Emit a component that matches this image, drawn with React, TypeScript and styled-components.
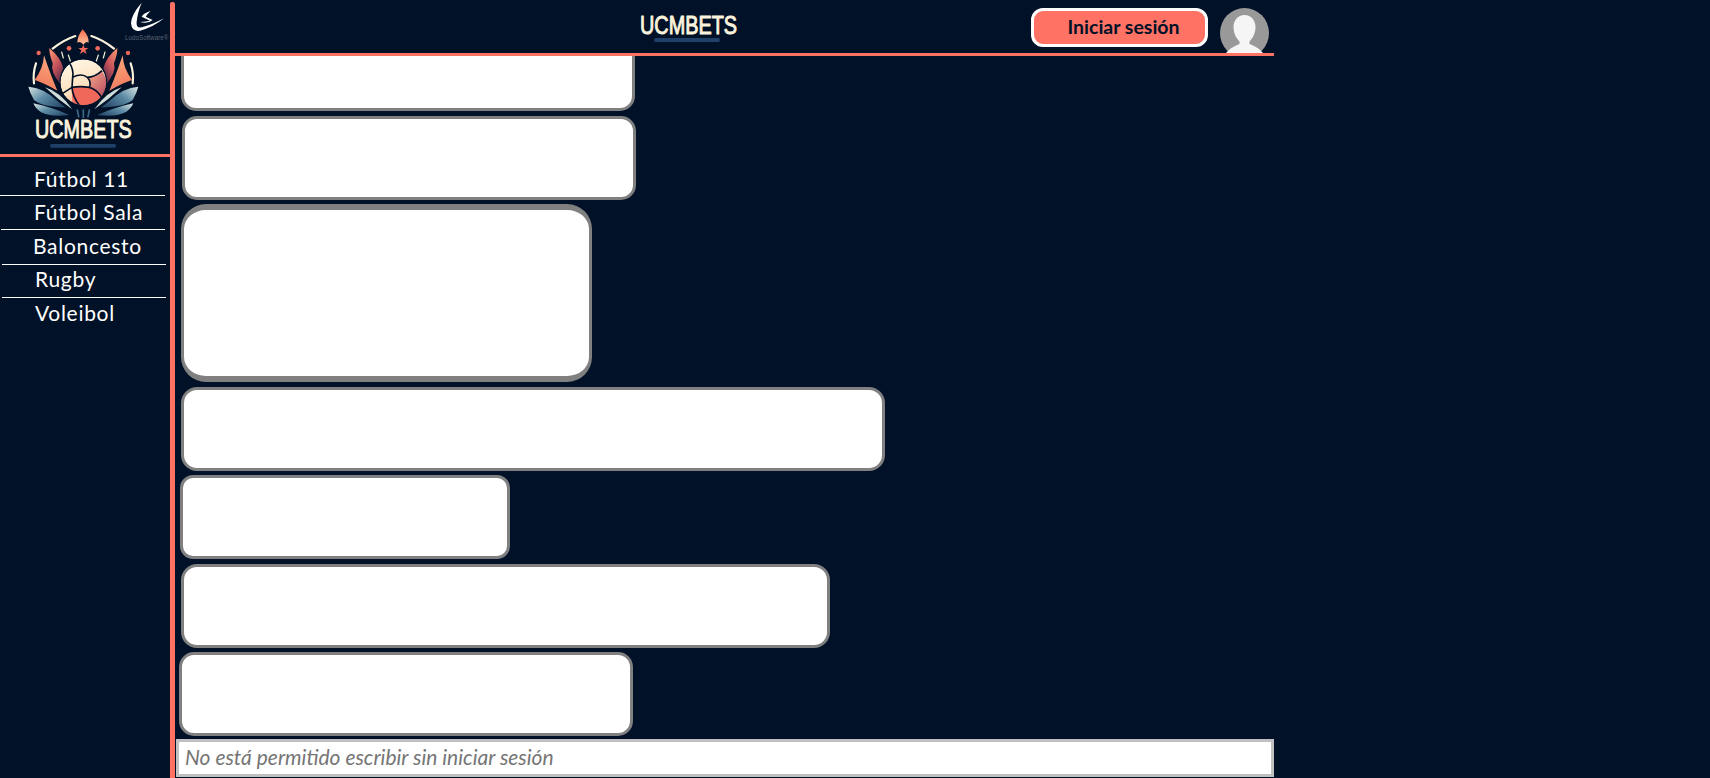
import React from "react";
import styled, { createGlobalStyle } from "styled-components";

const NAVY = "#001128";
const CORAL = "#ff7264";
const CREAM = "#fbf3dc";

const Global = createGlobalStyle`
  html, body { margin: 0; padding: 0; background: ${NAVY}; overflow: hidden; }
  * { box-sizing: border-box; }
`;

const Page = styled.div`
  display: flex;
  width: 1710px;
  height: 778px;
  background: ${NAVY};
  overflow: hidden;
  font-family: "Lato", "Liberation Sans", sans-serif;
`;

const Sidebar = styled.aside`
  display: flex;
  flex-direction: column;
  width: 170px;
  flex: none;
`;

const Brand = styled.div`
  position: relative;
  height: 157px;
  border-bottom: 3px solid ${CORAL};
`;

const Emblem = styled.svg`
  display: block;
  width: 170px;
  height: 154px;
`;

const MakerMark = styled.svg`
  position: absolute;
  top: 0;
  left: 125px;
  width: 45px;
  height: 42px;
  overflow: visible;
`;

const Menu = styled.nav`
  display: flex;
  flex-direction: column;
  padding-top: 8px;
`;

const MenuItem = styled.a<{ $height: number; $width: number; $lineLeft: number; $textLeft: number; $lift: number; $last?: boolean }>`
  display: flex;
  align-items: center;
  height: ${(p) => p.$height}px;
  width: ${(p) => p.$width}px;
  margin-left: ${(p) => p.$lineLeft}px;
  padding: 0 0 ${(p) => p.$lift}px ${(p) => p.$textLeft}px;
  color: #fff;
  font-size: 21px;
  letter-spacing: 0.7px;
  border-bottom: ${(p) => (p.$last ? "none" : "1px solid #fff")};
`;

const Rail = styled.div`
  flex: none;
  width: 5px;
  margin-top: 2px;
  background: ${CORAL};
  border-radius: 2px 2px 0 0;
`;

const Main = styled.main`
  display: flex;
  flex-direction: column;
  flex: none;
  width: 1099px;
  height: 778px;
`;

const Header = styled.header`
  display: flex;
  align-items: flex-start;
  flex: none;
  height: 56px;
  padding: 8px 5px 0 465px;
  border-bottom: 3px solid ${CORAL};
  overflow: hidden;
`;

const Wordmark = styled.svg`
  display: block;
  flex: none;
  width: 97px;
  height: 36px;
  overflow: visible;
`;

const LoginButton = styled.button`
  flex: none;
  width: 177px;
  height: 39px;
  margin-left: auto;
  padding: 0 0 2px 8px;
  background: ${CORAL};
  border: 3px solid #fff;
  border-radius: 12px;
  color: ${NAVY};
  font-family: inherit;
  font-size: 19.5px;
  font-weight: 700;
`;

const Avatar = styled.svg`
  display: block;
  flex: none;
  width: 49px;
  height: 45px;
  margin-left: 12px;
`;

const Chat = styled.section`
  display: flex;
  flex-direction: column;
  justify-content: flex-end;
  flex: 1;
  min-height: 0;
  padding-bottom: 3px;
  overflow: hidden;
`;

const Bubble = styled.div<{ $left: number; $width: number; $height: number; $gap: number; $tall?: boolean; $radius: number }>`
  flex: none;
  width: ${(p) => p.$width}px;
  height: ${(p) => p.$height}px;
  margin-left: ${(p) => p.$left}px;
  margin-bottom: ${(p) => p.$gap}px;
  background: #fff;
  border-style: solid;
  border-color: #808080;
  border-width: ${(p) => (p.$tall ? "6px 3px" : "3px")};
  border-radius: ${(p) => p.$radius}px;
`;

const Notice = styled.div`
  display: flex;
  align-items: center;
  flex: none;
  height: 38px;
  margin: 0 0 1px 1px;
  padding: 0 0 3px 6px;
  background: #fff;
  border: 3px solid #c0c0c0;
  color: #757575;
  font-size: 21px;
  font-style: italic;
`;

const sports = [
  { name: "Fútbol 11", height: 31, width: 165, lineLeft: 0, textLeft: 34, lift: 4 },
  { name: "Fútbol Sala", height: 34, width: 164, lineLeft: 1, textLeft: 33, lift: 2 },
  { name: "Baloncesto", height: 35, width: 164, lineLeft: 2, textLeft: 31, lift: 4 },
  { name: "Rugby", height: 33, width: 164, lineLeft: 2, textLeft: 33, lift: 6 },
  { name: "Voleibol", height: 30, width: 164, lineLeft: 2, textLeft: 33, lift: 2, last: true },
];

const bubbles = [
  { left: 6, width: 454, height: 84, gap: 5, radius: 15 },
  { left: 7, width: 454, height: 84, gap: 4, radius: 15 },
  { left: 6, width: 411, height: 178, gap: 5, radius: 25, tall: true },
  { left: 6, width: 704, height: 84, gap: 4, radius: 16 },
  { left: 5, width: 330, height: 84, gap: 5, radius: 13 },
  { left: 6, width: 649, height: 84, gap: 4, radius: 16 },
  { left: 4, width: 454, height: 84, gap: 0, radius: 15 },
];

function EmblemHalf() {
  return (
    <g>
      <path d="M158 146Q190 120 226 108" stroke={CREAM} strokeWidth="6.5" fill="none" strokeLinecap="round" />
      <path d="M108 190Q98 220 102 250" stroke={CREAM} strokeWidth="6.5" fill="none" strokeLinecap="round" />
      <circle cx="116" cy="159" r="6.5" fill="#f0675a" />
      <circle cx="207" cy="145" r="7" fill="#f0675a" />
      <path d="M185 156L190 174M205 165L211 183" stroke={CREAM} strokeWidth="3.5" strokeLinecap="round" />
      <path d="M132 166Q130 205 104 240Q130 248 172 272Q152 225 132 166Z" fill="url(#flameOuter)" />
      <path d="M148 144Q182 172 190 205Q178 225 182 254Q150 215 158 190Q148 165 148 144Z" fill="url(#flameInner)" />
      <path d="M85 260Q130 262 175 305Q190 318 197 322Q130 322 102 300Q90 280 85 260Z" fill="url(#leaf)" />
      <path d="M135 262Q180 275 217 328Q175 300 135 262Z" fill="#cfdcd8" />
      <path d="M100 310Q150 320 208 345Q150 352 122 336Q106 325 100 310Z" fill="url(#leaf)" />
      <path d="M232 330L236 350" stroke="#3c6a88" strokeWidth="5" strokeLinecap="round" />
    </g>
  );
}

function App() {
  return (
    <>
      <Global />
      <Page>
        <Sidebar>
          <Brand>
            <Emblem viewBox="0 0 510 462">
              <defs>
                <linearGradient id="flameOuter" x1="0.6" y1="0" x2="0.3" y2="1">
                  <stop offset="0" stopColor="#fbaa7c" />
                  <stop offset="1" stopColor="#f0775c" />
                </linearGradient>
                <linearGradient id="flameInner" x1="0" y1="0" x2="0.6" y2="1">
                  <stop offset="0" stopColor="#ff9a70" />
                  <stop offset="0.6" stopColor="#c4505a" />
                  <stop offset="1" stopColor="#5d2f4a" />
                </linearGradient>
                <linearGradient id="leaf" x1="0" y1="0" x2="1" y2="0.7">
                  <stop offset="0" stopColor="#d9e6e2" />
                  <stop offset="0.5" stopColor="#5d8ba6" />
                  <stop offset="1" stopColor="#2c4f6e" />
                </linearGradient>
                <linearGradient id="ballBase" x1="0.3" y1="0" x2="0.7" y2="1">
                  <stop offset="0" stopColor="#fff6e6" />
                  <stop offset="0.6" stopColor="#fde0bd" />
                  <stop offset="1" stopColor="#f8a484" />
                </linearGradient>
                <linearGradient id="ballSide" x1="0" y1="0" x2="1" y2="1">
                  <stop offset="0" stopColor="#f9b08a" />
                  <stop offset="1" stopColor="#b2415f" />
                </linearGradient>
                <linearGradient id="tip" x1="0" y1="0" x2="0" y2="1">
                  <stop offset="0" stopColor="#f4694f" />
                  <stop offset="1" stopColor="#ffc59c" />
                </linearGradient>
                <filter id="soft">
                  <feGaussianBlur stdDeviation="0.9" />
                </filter>
                <clipPath id="ballClip">
                  <circle cx="250" cy="247" r="69" />
                </clipPath>
              </defs>
              <g filter="url(#soft)">
                <EmblemHalf />
                <g transform="matrix(-1 0 0 1 500 0)">
                  <EmblemHalf />
                </g>
                <path d="M248 88Q268 110 266 128Q258 122 250 134Q242 122 232 128Q232 108 248 88Z" fill="url(#tip)" />
                <path
                  d="M250 134L254 144L265 144L256 151L260 162L250 155L240 162L244 151L235 144L246 144Z"
                  fill="#f0675a"
                />
                <path d="M250 330V352" stroke="#3c6a88" strokeWidth="5" strokeLinecap="round" />
                <circle cx="250" cy="247" r="69" fill="url(#ballBase)" />
                <g clipPath="url(#ballClip)">
                  <path d="M216 262Q240 258 268 262Q292 270 305 292L290 322L220 322Q214 290 216 262Z" fill="#f0675a" />
                  <path d="M262 232Q285 232 306 212L325 250L305 292Q292 270 268 262Q275 245 262 232Z" fill="url(#ballSide)" />
                  <path
                    d="M208 188Q222 210 218 232M218 232Q245 218 262 232Q275 245 268 262M218 232L216 262Q240 258 268 262M262 232Q285 232 306 212M216 262L188 280M216 262Q218 290 238 316M268 262Q290 268 305 292"
                    stroke={NAVY}
                    strokeWidth="5"
                    fill="none"
                  />
                </g>
                <circle cx="250" cy="247" r="70" stroke={NAVY} strokeWidth="3" fill="none" />
              </g>
              <text
                x="105"
                y="414"
                textLength="290"
                lengthAdjust="spacingAndGlyphs"
                fontFamily="'Liberation Sans Narrow','Liberation Sans',sans-serif"
                fontWeight="400"
                fontSize="76"
                fill={CREAM}
                stroke={CREAM}
                strokeWidth="3"
                strokeLinejoin="round"
              >
                UCMBETS
              </text>
              <rect x="150" y="432" width="198" height="11" rx="5" fill="#1f4068" />
            </Emblem>
            <MakerMark viewBox="375 0 135 126">
              <path d="M425 8Q393 45 393 70Q396 97 420 92Q460 82 492 55Q455 75 425 82Q407 85 410 65Q412 40 425 8Z" fill="#fff" />
              <path d="M452 33Q430 40 425 50L450 62Q440 65 420 66Q445 72 458 60L437 50Q442 42 452 33Z" fill="#fff" />
              <text x="375" y="120" textLength="130" lengthAdjust="spacingAndGlyphs" fontFamily="'Liberation Sans',sans-serif" fontSize="20" fill="#5a6270">
                LudoSoftware®
              </text>
            </MakerMark>
          </Brand>
          <Menu>
            {sports.map((s) => (
              <MenuItem key={s.name} $height={s.height} $width={s.width} $lineLeft={s.lineLeft} $textLeft={s.textLeft} $lift={s.lift} $last={s.last}>
                {s.name}
              </MenuItem>
            ))}
          </Menu>
        </Sidebar>
        <Rail />
        <Main>
          <Header>
            <Wordmark viewBox="0 0 97 36">
              <text
                x="0"
                y="26"
                textLength="97"
                lengthAdjust="spacingAndGlyphs"
                fontFamily="'Liberation Sans Narrow','Liberation Sans',sans-serif"
                fontWeight="400"
                fontSize="25.5"
                fill={CREAM}
                stroke={CREAM}
                strokeWidth="1"
                strokeLinejoin="round"
              >
                UCMBETS
              </text>
              <rect x="14" y="30" width="66" height="4" rx="2" fill="#1f4068" />
            </Wordmark>
            <LoginButton>Iniciar sesión</LoginButton>
            <Avatar viewBox="0 0 49 45">
              <ellipse cx="24.5" cy="25" rx="24.5" ry="25" fill="#999" />
              <path d="M24.5 7C31 7 35.5 12 35.5 19C35.5 25 33 30 29.5 33.5V36Q38 39 43 45H6Q11 39 19.5 36V33.5C16 30 13.5 25 13.5 19C13.5 12 18 7 24.5 7Z" fill="#f5f5f5" />
            </Avatar>
          </Header>
          <Chat>
            {bubbles.map((b, i) => (
              <Bubble key={i} $left={b.left} $width={b.width} $height={b.height} $gap={b.gap} $radius={b.radius} $tall={b.tall} />
            ))}
          </Chat>
          <Notice>No está permitido escribir sin iniciar sesión</Notice>
        </Main>
      </Page>
    </>
  );
}

export default App;
